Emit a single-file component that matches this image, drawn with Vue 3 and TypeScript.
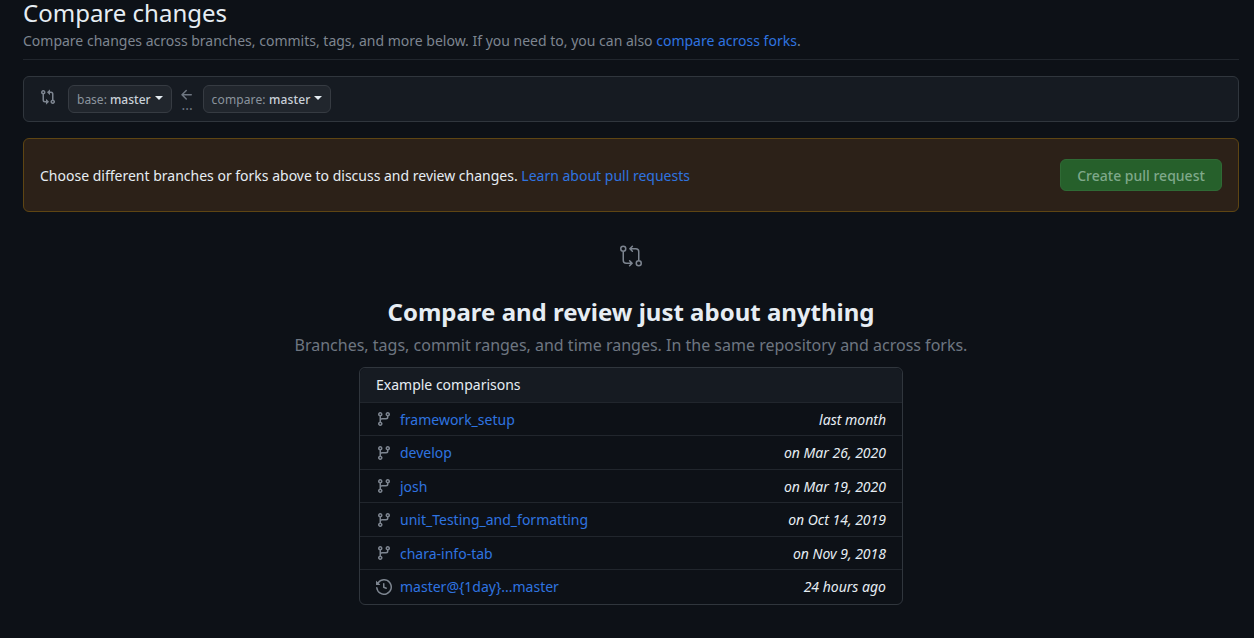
<script setup lang="ts">
interface Row { name: string; when: string; icon: 'branch' | 'history' }
const rows: Row[] = [
  { name: 'framework_setup', when: 'last month', icon: 'branch' },
  { name: 'develop', when: 'on Mar 26, 2020', icon: 'branch' },
  { name: 'josh', when: 'on Mar 19, 2020', icon: 'branch' },
  { name: 'unit_Testing_and_formatting', when: 'on Oct 14, 2019', icon: 'branch' },
  { name: 'chara-info-tab', when: 'on Nov 9, 2018', icon: 'branch' },
  { name: 'master@{1day}...master', when: '24 hours ago', icon: 'history' },
]
const compare = 'M9.573.677A.25.25 0 0 1 10 .854V2.5h1A2.5 2.5 0 0 1 13.5 5v5.628a2.251 2.251 0 1 1-1.5 0V5a1 1 0 0 0-1-1h-1v1.646a.25.25 0 0 1-.427.177L7.177 3.427a.25.25 0 0 1 0-.354ZM6 12v-1.646a.25.25 0 0 1 .427-.177l2.396 2.396a.25.25 0 0 1 0 .354l-2.396 2.396A.25.25 0 0 1 6 14.75V13.5H5A2.5 2.5 0 0 1 2.5 11V5.372a2.25 2.25 0 1 1 1.5 0V11a1 1 0 0 0 1 1ZM4 3.25a.75.75 0 1 0-1.5 0 .75.75 0 0 0 1.5 0ZM12.75 12a.75.75 0 1 0 0 1.5.75.75 0 0 0 0-1.5Z'
const compare24 = 'M16.5 19.25a3.25 3.25 0 1 1 6.5 0 3.25 3.25 0 0 1-6.5 0Zm3.25-1.75a1.75 1.75 0 1 0 .001 3.501 1.75 1.75 0 0 0-.001-3.501Z M13.905 1.72a.75.75 0 0 1 0 1.06L12.685 4h4.065a3.75 3.75 0 0 1 3.75 3.75v8.75a.75.75 0 0 1-1.5 0V7.75a2.25 2.25 0 0 0-2.25-2.25h-4.064l1.22 1.22a.75.75 0 0 1-1.061 1.06l-2.5-2.5a.75.75 0 0 1 0-1.06l2.5-2.5a.75.75 0 0 1 1.06 0ZM7.5 4.75a3.25 3.25 0 1 1-6.5 0 3.25 3.25 0 0 1 6.5 0ZM4.25 6.5a1.75 1.75 0 1 0-.001-3.501A1.75 1.75 0 0 0 4.25 6.5Z M10.095 22.28a.75.75 0 0 1 0-1.06l1.22-1.22H7.25a3.75 3.75 0 0 1-3.75-3.75V7.5a.75.75 0 0 1 1.5 0v8.75a2.25 2.25 0 0 0 2.25 2.25h4.064l-1.22-1.22a.75.75 0 0 1 1.061-1.06l2.5 2.5a.75.75 0 0 1 0 1.06l-2.5 2.5a.75.75 0 0 1-1.06 0Z'
const branch = 'M9.5 3.25a2.25 2.25 0 1 1 3 2.122V6A2.5 2.5 0 0 1 10 8.5H6a1 1 0 0 0-1 1v1.128a2.251 2.251 0 1 1-1.5 0V5.372a2.25 2.25 0 1 1 1.5 0v1.836A2.493 2.493 0 0 1 6 7h4a1 1 0 0 0 1-1v-.628A2.25 2.25 0 0 1 9.5 3.25Zm-6 0a.75.75 0 1 0 1.5 0 .75.75 0 0 0-1.5 0Zm8.25-.75a.75.75 0 1 0 0 1.5.75.75 0 0 0 0-1.5ZM4.25 12a.75.75 0 1 0 0 1.5.75.75 0 0 0 0-1.5Z'
const history = 'm.427 1.927 1.215 1.215a8.002 8.002 0 1 1-1.6 5.685.75.75 0 1 1 1.493-.154 6.5 6.5 0 1 0 1.18-4.458l1.358 1.358A.25.25 0 0 1 3.896 6H.25A.25.25 0 0 1 0 5.75V2.104a.25.25 0 0 1 .427-.177ZM7.75 4a.75.75 0 0 1 .75.75v2.992l2.028.812a.75.75 0 0 1-.557 1.392l-2.5-1A.751.751 0 0 1 7 8.25v-3.5A.75.75 0 0 1 7.75 4Z'
const arrow = 'M7.78 12.53a.75.75 0 0 1-1.06 0L2.47 8.28a.75.75 0 0 1 0-1.06l4.25-4.25a.751.751 0 0 1 1.042.018.751.751 0 0 1 .018 1.042L4.81 7h7.44a.75.75 0 0 1 0 1.5H4.81l2.97 2.97a.75.75 0 0 1 0 1.06Z'
</script>

<template>
  <div class="page">
    <header class="head">
      <h1>Compare changes</h1>
      <p>Compare changes across branches, commits, tags, and more below. If you need to, you can also <a href="#">compare across forks</a>.</p>
    </header>

    <section class="range">
      <svg class="range-icon" viewBox="0 0 16 16" width="16" height="16"><path :d="compare" /></svg>
      <button class="ref"><span class="dim">base:</span> master<i class="caret"></i></button>
      <div class="sep">
        <svg viewBox="0 0 16 16" width="16" height="16"><path :d="arrow" /></svg>
        <span class="dots">...</span>
      </div>
      <button class="ref wide"><span class="dim">compare:</span> master<i class="caret"></i></button>
    </section>

    <section class="flash">
      <span>Choose different branches or forks above to discuss and review changes. <a href="#">Learn about pull requests</a></span>
      <button class="create">Create pull request</button>
    </section>

    <section class="blank">
      <svg class="blank-icon" viewBox="0 0 24 24" width="24" height="24"><path :d="compare24" /></svg>
      <h2>Compare and review just about anything</h2>
      <p>Branches, tags, commit ranges, and time ranges. In the same repository and across forks.</p>
      <div class="box">
        <div class="box-head">Example comparisons</div>
        <div v-for="r in rows" :key="r.name" class="row">
          <span class="icon-cell">
            <svg v-if="r.icon === 'branch'" viewBox="0 0 16 16" width="16" height="16"><path :d="branch" /></svg>
            <svg v-else viewBox="0 0 16 16" width="16" height="16"><path :d="history" /></svg>
          </span>
          <a href="#">{{ r.name }}</a>
          <em>{{ r.when }}</em>
        </div>
      </div>
    </section>
  </div>
</template>

<style>
html, body { margin: 0; background: #0d1117; }
</style>

<style scoped>
.page {
  box-sizing: border-box;
  width: 1254px;
  height: 638px;
  padding: 0 15px 0 23px;
  overflow: hidden;
  background: #0d1117;
  color: #e6edf3;
  font-family: "Noto Sans", sans-serif;
  font-size: 14px;
  line-height: 21px;
}
a { color: #2f74e0; text-decoration: none; }
svg { display: block; fill: currentColor; }
.head { height: 59px; border-bottom: 1px solid #21262d; }
h1 { margin: 0; font-size: 24px; font-weight: 400; line-height: 26px; }
.head p { margin: 4px 0 0; color: #7d8590; line-height: 21px; }
.range {
  display: flex;
  align-items: center;
  height: 46px;
  box-sizing: border-box;
  margin-top: 16px;
  padding: 0 16px;
  background: #161b22;
  border: 1px solid #30363d;
  border-radius: 6px;
}
.range-icon { color: #7d8590; margin: -4px 12px 0 0; }
.ref {
  display: flex;
  align-items: center;
  box-sizing: border-box;
  height: 28px;
  padding: 2px 8px 0;
  background: #21262d;
  border: 1px solid #363b42;
  border-radius: 6px;
  color: #c9d1d9;
  font: 500 12px/20px "Noto Sans", sans-serif;
  white-space: pre;
}
.wide { letter-spacing: 0.13px; }
.dim { color: #8b949e; font-weight: 400; }
.caret {
  width: 0;
  height: 0;
  margin: -5px 0 0 4px;
  border: 4px solid transparent;
  border-top-color: #e6edf3;
  border-bottom-width: 0;
}
.sep {
  display: flex;
  flex-direction: column;
  align-items: center;
  width: 31px;
  margin-top: -2px;
  color: #6e7681;
}
.dots { font-size: 14px; line-height: 10px; margin-top: -3px; }
.flash {
  display: flex;
  align-items: center;
  justify-content: space-between;
  box-sizing: border-box;
  height: 74px;
  margin-top: 16px;
  padding: 0 16px;
  background: #2c2118;
  border: 1px solid #5e4513;
  border-radius: 6px;
}
.create {
  box-sizing: border-box;
  width: 162px;
  height: 32px;
  padding: 2px 0 0;
  background: #26602b;
  border: 1px solid #2f6a35;
  border-radius: 6px;
  color: #7fa98a;
  font: 500 14px/20px "Noto Sans", sans-serif;
}
.blank { display: flex; flex-direction: column; align-items: center; }
.blank-icon { color: #7d8590; margin-top: 32px; }
h2 { margin: 28px 0 0; font-size: 24px; font-weight: 700; line-height: 32px; }
.blank p { margin: 5px 0 0; font-size: 16px; line-height: 24px; color: #6e7681; }
.box {
  box-sizing: border-box;
  width: 544px;
  margin-top: 10px;
  padding-bottom: 1.5px;
  border: 1px solid #30363d;
  border-radius: 6px;
}
.box-head {
  box-sizing: border-box;
  height: 33.5px;
  padding: 0 16px 1px;
  display: flex;
  align-items: center;
  background: #161b22;
  border-radius: 6px 6px 0 0;
}
.row {
  box-sizing: border-box;
  display: flex;
  align-items: center;
  height: 33.5px;
  padding: 1px 16px 0;
  border-top: 1px solid #21262d;
}
.icon-cell { width: 24px; color: #7d8590; }
.row em { margin-left: auto; }
</style>
